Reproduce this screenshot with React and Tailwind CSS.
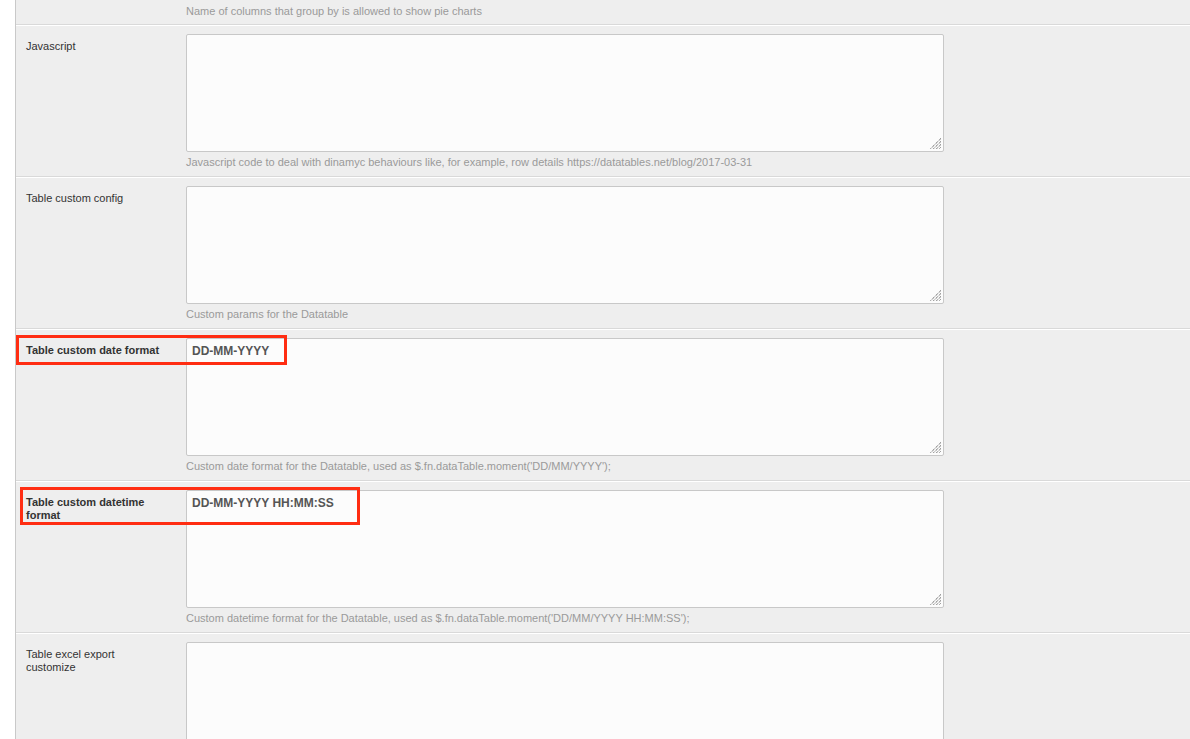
import React from 'react';

const font = { fontFamily: '"Liberation Sans", Arial, sans-serif' };

const Grip = () => (
  <svg className="absolute right-[1px] bottom-[1px] w-[14px] h-[14px]" viewBox="0 0 14 14">
    <path d="M13 2 L2 13 M13 5 L5 13 M13 8 L8 13 M13 11 L11 13" stroke="#7a7a7a" strokeWidth="1" strokeDasharray="1 1" />
    <path d="M13 3 L3 13 M13 6 L6 13 M13 9 L9 13" stroke="#b0b0b0" strokeWidth="1" strokeDasharray="1 1" />
  </svg>
);

const FieldRow = ({ label, bold, value, help }) => (
  <div className="flex border-t border-t-white border-b border-b-[#d9d9d9]">
    <div className={`w-[170px] shrink-0 pl-[10px] pr-[24px] pt-[14px] text-[11px] leading-[13px] text-[#333] ${bold ? 'font-bold' : ''}`}>
      {label}
    </div>
    <div className="pt-[8px] pb-[7px]">
      <div className="relative w-[758px] h-[118px] bg-[#fcfcfc] border border-[#c8c8c8] rounded-[2px]">
        <textarea
          readOnly
          value={value || ''}
          className="w-full h-full resize-none bg-transparent outline-none px-[5px] pt-[5px] text-[12px] leading-[14px] font-bold text-[#555]"
          style={font}
        />
        <Grip />
      </div>
      <div className="mt-[3px] text-[11px] leading-[14px] text-[#9a9a9a]">{help}</div>
    </div>
  </div>
);

export default function App() {
  return (
    <div className="w-[1190px] h-[739px] overflow-hidden bg-white" style={font}>
      <div className="relative ml-[15px] h-full bg-[#eeeeee] border-l border-[#c9c9c9]">
        <div className="pl-[170px] pt-[4px] pb-[6px] border-b border-b-[#d9d9d9] text-[11px] leading-[14px] text-[#9a9a9a]">
          Name of columns that group by is allowed to show pie charts
        </div>
        <FieldRow
          label="Javascript"
          help="Javascript code to deal with dinamyc behaviours like, for example, row details https://datatables.net/blog/2017-03-31"
        />
        <FieldRow label="Table custom config" help="Custom params for the Datatable" />
        <FieldRow
          label="Table custom date format"
          bold
          value="DD-MM-YYYY"
          help="Custom date format for the Datatable, used as $.fn.dataTable.moment('DD/MM/YYYY');"
        />
        <FieldRow
          label="Table custom datetime format"
          bold
          value="DD-MM-YYYY HH:MM:SS"
          help="Custom datetime format for the Datatable, used as $.fn.dataTable.moment('DD/MM/YYYY HH:MM:SS');"
        />
        <FieldRow label="Table excel export customize" help="" />

        {/* annotation boxes */}
        <div className="absolute left-0 top-[335px] w-[271px] h-[30px] border-[3px] border-[#ff2d12]" />
        <div className="absolute left-[4px] top-[487px] w-[340px] h-[38px] border-[3px] border-[#ff2d12]" />
      </div>
    </div>
  );
}
